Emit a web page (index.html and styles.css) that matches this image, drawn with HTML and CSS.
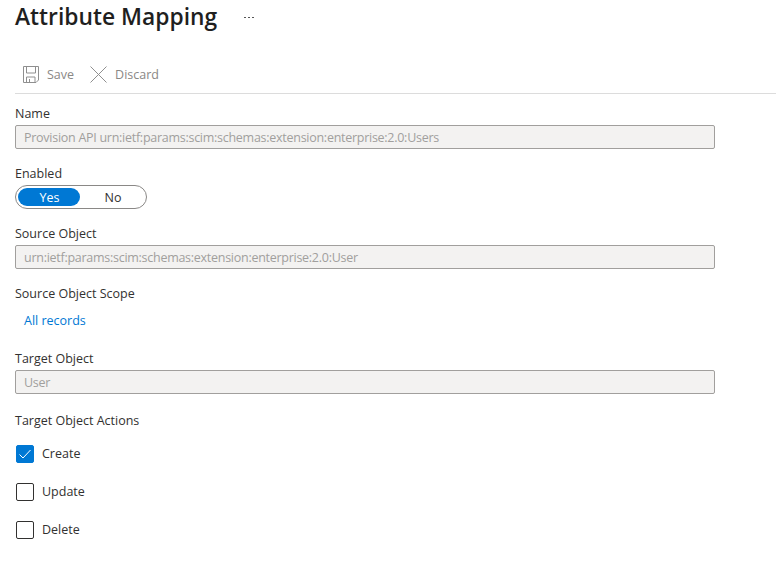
FILE: index.html
```html
<!DOCTYPE html>
<html lang="en">
<head>
<meta charset="utf-8">
<title>Attribute Mapping</title>
<link rel="stylesheet" href="styles.css">
</head>
<body>
<div class="page">
  <header class="title-row">
    <h1 class="title">Attribute Mapping</h1>
    <span class="more" aria-hidden="true"><i></i><i></i><i></i></span>
  </header>
  <div class="toolbar">
    <span class="tool">
      <svg class="tool-icon" width="16" height="17" viewBox="0 0 16 17" fill="none" stroke="#8f8f8f" stroke-width="1">
        <path d="M.5 .5h15v13.500l-2.500 2.500h-12.500z"/>
        <path d="M3.500 .5v6.500h9v-6.500"/>
        <path d="M3.500 16.500v-5.500h8.500v5.500"/>
        <path d="M6.500 13v3.500"/>
      </svg>
      <span class="tool-text">Save</span>
    </span>
    <span class="tool">
      <svg class="tool-icon" width="17" height="17" viewBox="0 0 17 17" fill="none" stroke="#8f8f8f" stroke-width="1">
        <path d="M.5 .5l16 16M16.500 .5l-16 16"/>
      </svg>
      <span class="tool-text">Discard</span>
    </span>
  </div>
  <form class="form">
    <div class="label l-name">Name</div>
    <div class="input">Provision API urn:ietf:params:scim:schemas:extension:enterprise:2.0:Users</div>
    <div class="label l-next">Enabled</div>
    <div class="toggle">
      <span class="seg seg-on">Yes</span>
      <span class="seg seg-off">No</span>
    </div>
    <div class="label l-next">Source Object</div>
    <div class="input">urn:ietf:params:scim:schemas:extension:enterprise:2.0:User</div>
    <div class="label l-next">Source Object Scope</div>
    <a class="link">All records</a>
    <div class="label l-target">Target Object</div>
    <div class="input">User</div>
    <div class="label l-actions">Target Object Actions</div>
    <div class="checks">
      <div class="check">
        <span class="box box-on">
          <svg width="12" height="12" viewBox="0 0 12 12" fill="none" stroke="#fff" stroke-width="1"><path d="M.5 6.500l3.500 3.500L11.500 2"/></svg>
        </span>
        <span class="check-text">Create</span>
      </div>
      <div class="check"><span class="box"></span><span class="check-text">Update</span></div>
      <div class="check"><span class="box"></span><span class="check-text">Delete</span></div>
    </div>
  </form>
</div>
</body>
</html>
```
FILE: styles.css
```css
* { box-sizing: border-box; }
html, body { margin: 0; padding: 0; background: #fff; }
body { font-family: "Open Sans", "Noto Sans", sans-serif; color: #323130; font-size: 12.5px; overflow: hidden; }
.page { width: 776px; height: 567px; padding-left: 15px; }
.title-row { display: flex; align-items: flex-start; height: 36px; }
.title { margin: 0; font-size: 22.8px; font-weight: 600; color: #1f1f1f; line-height: 34px; white-space: nowrap; width: 203px; }
.more { display: flex; gap: 2px; margin-left: 26px; margin-top: 17px; }
.more i { width: 2px; height: 1px; background: #555; }
.toolbar { display: flex; align-items: center; height: 58px; padding: 20px 0 0 8px; gap: 16px; border-bottom: 1px solid #dcdcdc; }
.tool { display: flex; align-items: center; gap: 8px; }
.tool-text { color: #8a8886; }
.form { display: flex; flex-direction: column; width: 700px; }
.label { height: 18px; line-height: 18px; white-space: nowrap; margin-bottom: 2px; }
.l-name { margin-top: 11px; }
.l-next { margin-top: 16px; }
.l-target { margin-top: 20px; }
.l-actions { margin-top: 18px; margin-bottom: 0; }
.input { height: 24px; line-height: 24px; padding-left: 8px; background: #f3f2f1; border: 1px solid #a19f9d; border-radius: 2px; color: #a19f9d; white-space: nowrap; letter-spacing: -0.27px; }
.toggle { display: flex; align-items: center; width: 132px; height: 24px; padding: 0 2px; border: 1px solid #8a8886; border-radius: 12px; }
.seg { flex: none; height: 18px; line-height: 20px; text-align: center; border-radius: 9px; }
.seg-on { width: 62px; padding-left: 1px; background: #0078d4; color: #fff; }
.seg-off { width: 66px; }
.link { margin: 7px 0 0 9px; height: 18px; line-height: 18px; color: #0078d4; }
.checks { display: flex; flex-direction: column; gap: 20px; margin-top: 15px; padding-left: 1px; }
.check { display: flex; align-items: center; gap: 8px; height: 18px; }
.check-text { height: 18px; line-height: 17px; }
.box { display: flex; align-items: center; justify-content: center; width: 18px; height: 18px; border: 1px solid #323130; border-radius: 2px; background: #fff; }
.box-on { background: #0078d4; border-color: #0078d4; }
```
